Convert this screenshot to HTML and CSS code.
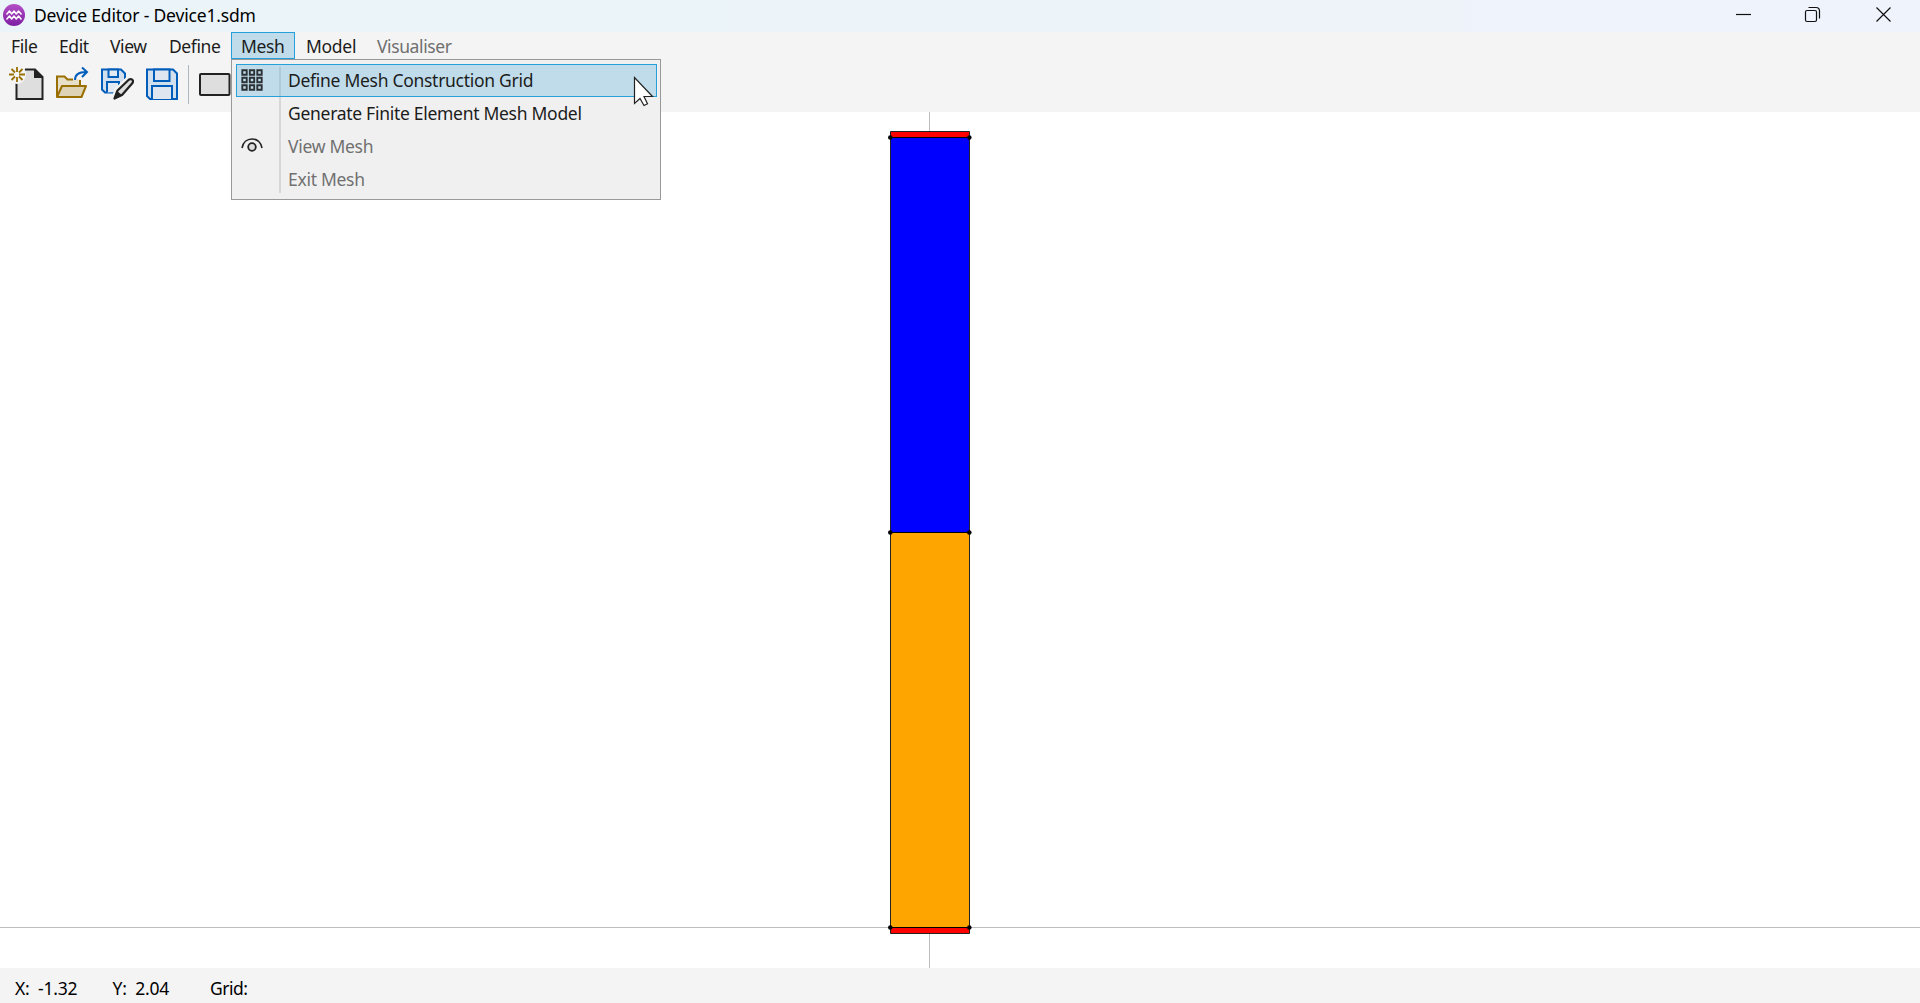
FILE: index.html
```html
<!DOCTYPE html>
<html lang="en">
<head>
<meta charset="utf-8">
<title>Device Editor - Device1.sdm</title>
<link rel="stylesheet" href="styles.css">
</head>
<body>
<div class="window">
  <header class="titlebar">
    <svg class="app-icon" width="24" height="24" viewBox="0 0 24 24"><defs><linearGradient id="orb" x2="0" y2="1"><stop offset="0" stop-color="#b44fc4"/><stop offset="1" stop-color="#7d1fa3"/></linearGradient></defs><circle cx="12" cy="12" r="11" fill="url(#orb)"/><path d="M4.500 11.500L7.500 8l2.200 3L12 8l2.300 3 2.200-3 3 3.500M4.500 16.500l3-3.500 2.200 3L12 13l2.300 3 2.200-3 3 3.500" fill="none" stroke="#fff" stroke-width="1.500" stroke-linejoin="round"/></svg>
    <span class="title">Device Editor - Device1.sdm</span>
    <div class="controls">
      <svg class="control" width="71" height="32" viewBox="0 0 71 32"><path d="M28 14.500h15"/></svg>
      <svg class="control" width="71" height="32" viewBox="0 0 71 32"><rect x="26.500" y="10.500" width="11" height="11" rx="1.500"/><path d="M29.500 7.500h7.500q3.500 0 3.500 3.500v7.500"/></svg>
      <svg class="control" width="71" height="32" viewBox="0 0 71 32"><path d="M26.500 7.500l14 14m0-14l-14 14"/></svg>
    </div>
  </header>
  <nav class="menubar">
    <span class="menu file">File</span><span class="menu edit">Edit</span><span class="menu view">View</span><span class="menu define">Define</span><span class="menu mesh open">Mesh</span><span class="menu model">Model</span><span class="menu visualiser disabled">Visualiser</span>
  </nav>
  <div class="toolbar">
    <svg class="tool" width="36" height="36" viewBox="8 66 36 36"><path d="M16.500 82v17h26V77l-8-8H24" fill="#dedede"/><path d="M16.500 83v16h26V77l-7.500-7.500H25" fill="none" stroke="#222" stroke-width="2"/><path d="M34 69v9h9z" fill="#222"/><circle cx="17" cy="75" r="9" fill="#f4f4f4"/><path d="M17 67v5m0 5v5M9 74.500h5m5 0h6M11.500 69l3.500 3.500m4 4l3.500 3.500m0-11L19 72.500m-4 4L11.500 80" stroke="#996f00" stroke-width="1.800"/></svg>
    <svg class="tool" width="36" height="36" viewBox="53 66 36 36"><path d="M57 97V76.500h7.500l3 3H80V86" fill="#e8dfc8"/><path d="M57 97V76.500h7.500l3 3H73M80 80v6" fill="none" stroke="#996f00" stroke-width="2"/><path d="M57 97l5-11h24l-4.500 11z" fill="#ded3b5" stroke="#996f00" stroke-width="2" stroke-linejoin="round"/><path d="M75 80q0-8 11-8M82 67.500l5 4.500-5 5" fill="none" stroke="#005dba" stroke-width="2"/></svg>
    <svg class="tool" width="36" height="36" viewBox="98 66 36 36"><path d="M102 69.500h19l4 4v8l-11 11h-9l-3-3z" fill="#d2dfed" stroke="#005dba" stroke-width="2"/><path d="M108.500 69.500h9.500V77h-9.500zM107 92.500V82h12v10" fill="#e4eaf2" stroke="#005dba" stroke-width="2"/><path d="M114 98l3-8 11-11q3-1 4.500 1t0 4L122 96z" fill="#f4f4f4" stroke="#f4f4f4" stroke-width="5"/><path d="M114.500 98.500l3-8L129 79.500q2-1 3.300.2t.2 3.300L122 95z" fill="#ddd" stroke="#222" stroke-width="2.200" stroke-linejoin="round"/><path d="M114 99l3-8 5 4z" fill="#222"/></svg>
    <svg class="tool" width="36" height="36" viewBox="143 66 36 36"><path d="M147 69.500h26l4 4V99h-27l-3-3z" fill="#d2dfed" stroke="#005dba" stroke-width="2"/><path d="M154 69.500h15.500V81H154zM152 99V86h20v13" fill="#e0e6f0" stroke="#005dba" stroke-width="2"/></svg>
    <span class="separator"></span>
    <svg class="tool rectangle" width="36" height="36" viewBox="196 66 36 36"><rect x="200" y="74" width="29.500" height="21" rx="1" fill="#dedede" stroke="#222" stroke-width="2"/></svg>
  </div>
  <main class="workspace">
    <svg class="drawing" width="1920" height="856" viewBox="0 112 1920 856">
      <path d="M0 927.500h1920M929.500 112v856" stroke="#bdbdbd"/>
      <g stroke="#222"><path d="M890.500 131.500h79v6h-79zM890.500 927.500h79v6h-79z" fill="#f00"/><path d="M890.500 137.500h79v395h-79z" fill="#00f"/><path d="M890.500 532.500h79v395h-79z" fill="#ffa500"/></g>
      <path d="M890 137.500h80M890 532.500h80M890 927.500h80" stroke="#000"/>
      <g fill="#000"><circle cx="890.300" cy="137.500" r="2.300"/><circle cx="969.300" cy="137.500" r="2.300"/><circle cx="890.300" cy="532.500" r="2.300"/><circle cx="969.300" cy="532.500" r="2.300"/><circle cx="890.300" cy="927.500" r="2.300"/><circle cx="969.300" cy="927.500" r="2.300"/></g>
    </svg>
  </main>
  <footer class="statusbar"><span class="coord-x">X:&nbsp; -1.32</span><span class="coord-y">Y:&nbsp; 2.04</span><span class="grid-label">Grid:</span></footer>
</div>
<div class="dropdown">
  <div class="item active"><svg class="glyph" width="24" height="24" viewBox="0 0 24 24"><g fill="none" stroke="#2b3134" stroke-width="1.900"><path d="M2.300 2.300h4.400v4.400H2.300zM9.800 2.300h4.400v4.400H9.800zM17.300 2.300h4.400v4.400h-4.400zM2.300 9.800h4.400v4.400H2.300zM9.800 9.800h4.400v4.400H9.800zM17.300 9.800h4.400v4.400h-4.400zM2.300 17.300h4.400v4.400H2.300zM9.800 17.300h4.400v4.400H9.800zM17.300 17.300h4.400v4.400h-4.400z"/></g></svg><span class="label">Define Mesh Construction Grid</span></div>
  <div class="item"><span class="glyph"></span><span class="label">Generate Finite Element Mesh Model</span></div>
  <div class="item disabled"><svg class="glyph" width="24" height="24" viewBox="0 0 24 24"><path d="M2 14C3 8.500 7 5 12 5s9 3.500 10 9" fill="none" stroke="#222" stroke-width="1.600"/><circle cx="12" cy="13" r="3.800" fill="#ddd" stroke="#222" stroke-width="1.800"/></svg><span class="label">View Mesh</span></div>
  <div class="item disabled"><span class="glyph"></span><span class="label">Exit Mesh</span></div>
</div>
<svg class="cursor" width="24" height="34" viewBox="0 0 24 34"><path d="M1.500 1.500v26l5.500-5 4 7 3.500-1.800-3.500-7.200h8.500z" fill="#fff" stroke="#222" stroke-width="1.200"/></svg>
</body>
</html>
```
FILE: styles.css
```css
* { box-sizing: border-box; }
body { margin: 0; overflow: hidden; background: #fff; color: #1c1c1c; font: 17.5px/24px "Noto Sans", "Open Sans", sans-serif; white-space: nowrap; }
.window { display: flex; flex-direction: column; width: 1920px; height: 1003px; }
.titlebar { display: flex; align-items: center; height: 32px; padding-left: 2px; background: linear-gradient(90deg, #ebf4f8, #ebf4f8 35%, #eff3fb 80%, #eff3fb); color: #000; }
.app-icon { flex: none; margin-top: -2px; }
.title { margin: -2px 0 0 8px; letter-spacing: -.18px; }
.controls { display: flex; margin: 0 -1px 0 auto; }
.control { fill: none; stroke: #111; stroke-width: 1.2; }
.menubar { display: flex; height: 28px; padding-left: 1px; background: #f4f4f4; }
.menu { height: 27px; padding: 2px 0 0 10px; letter-spacing: -.4px; }
.file { width: 48px; }
.edit { width: 51px; }
.view { width: 59px; }
.define { width: 72px; }
.mesh { width: 64px; }
.model { width: 72px; padding-left: 11px; letter-spacing: -.3px; }
.open { border: 1px solid #26a0da; padding: 1px 0 0 9px; background: #c0dceb; }
.disabled { color: #707070; }
.toolbar { display: flex; height: 52px; padding: 6px 0 0 8px; gap: 9px; background: #f4f4f4; }
.tool { flex: none; }
.separator { width: 1px; height: 39px; margin: -1px 0 0; background: #b0b6be; }
.rectangle { margin-left: -2px; }
.workspace { height: 856px; }
.drawing { display: block; }
.statusbar { display: flex; height: 35px; padding: 8px 0 0 15px; background: #f4f4f4; color: #000; }
.coord-x { width: 97.5px; letter-spacing: -.25px; }
.coord-y { width: 97.5px; letter-spacing: -.25px; }
.grid-label { letter-spacing: -.5px; }
.dropdown { position: absolute; left: 231px; top: 59px; width: 430px; height: 141px; padding: 4px 3px 4px 4px; border: 1px solid #999; background: linear-gradient(#d7d7d7, #d7d7d7) 47px 7px / 2px 126px no-repeat #f0f0f0; }
.item { display: flex; align-items: center; height: 33px; padding-left: 3px; border: 1px solid transparent; }
.active { border-color: #26a0da; background: linear-gradient(#aecad7, #aecad7) 42px 2px / 2px 29px no-repeat #c0dceb; }
.glyph { flex: none; width: 24px; margin-top: -1px; }
.label { margin: -2px 0 0 24px; letter-spacing: -.29px; }
.cursor { position: absolute; left: 633px; top: 76px; }
```
